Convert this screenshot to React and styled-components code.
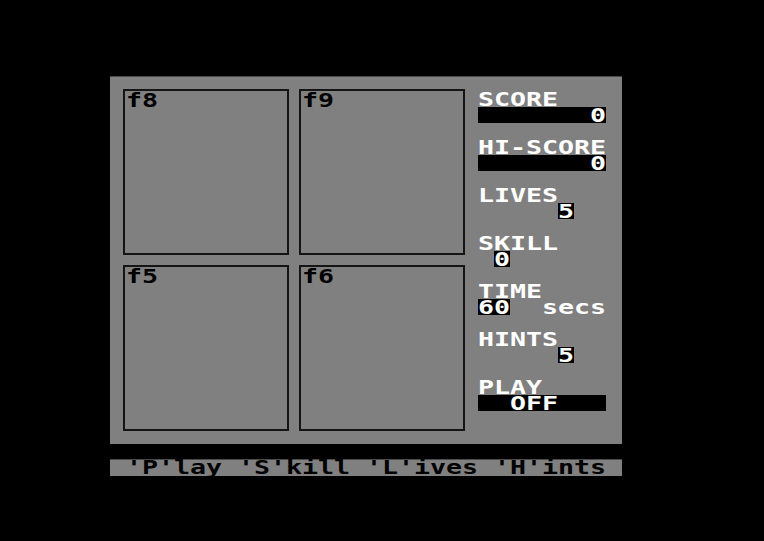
import React from 'react'
import styled, { createGlobalStyle } from 'styled-components'

const GlobalStyle = createGlobalStyle`
  html, body {
    margin: 0;
    padding: 0;
    background: #000;
  }
  body {
    width: 764px;
    height: 541px;
    overflow: hidden;
  }
`

const Screen = styled.div`
  width: 764px;
  height: 541px;
  padding: 76px 0 0 110px;
  box-sizing: border-box;
  background: #000;
`

const Panel = styled.div`
  width: 512px;
  height: 368px;
  box-sizing: border-box;
  background: #808080;
  border-top: 1px solid #4a4a4a;
  padding: 12px 0 0 13px;
  display: flex;
  align-items: flex-start;
`

const Board = styled.div`
  display: grid;
  grid-template-columns: 166px 166px;
  grid-template-rows: 166px 166px;
  gap: 10px;
`

const Box = styled.div`
  box-sizing: border-box;
  border: 2px solid #141414;
  padding: 1px 0 0 1px;
`

const Side = styled.div`
  margin: 2px 0 0 13px;
  width: 128px;
  display: flex;
  flex-direction: column;
`

const Field = styled.div`
  display: flex;
  flex-direction: column;
  margin-bottom: 16px;
`

const Line = styled.div`
  display: flex;
  height: 16px;
  padding-left: ${(p) => (p.col || 0) * 16}px;
  justify-content: ${(p) => (p.right ? 'flex-end' : 'flex-start')};
`

const Bar = styled(Line)`
  background: #000;
  width: 128px;
  box-sizing: border-box;
`

const Tile = styled.span`
  display: inline-flex;
  background: ${(p) => (p.clear ? 'transparent' : '#000')};
  height: 16px;
  margin-left: ${(p) => (p.skip || 0) * 16}px;
`

const Cell = styled.span`
  display: inline-block;
  width: 16px;
  height: 16px;
  line-height: 16px;
  text-align: center;
  font-family: "DejaVu Sans Mono", "Liberation Mono", monospace;
  font-weight: bold;
  font-size: 19px;
  color: ${(p) => p.color || '#fff'};
  transform: scaleX(1.4);
  white-space: pre;
`

const Status = styled.div`
  margin-top: 15px;
  width: 512px;
  height: 17px;
  box-sizing: border-box;
  background: #808080;
  border-top: 1px solid #4a4a4a;
  padding-left: 16px;
  display: flex;
  > span {
    margin-top: -1px;
  }
`

const Chars = ({ text, color }) =>
  text.split('').map((ch, i) => (
    <Cell key={i} color={color}>
      {ch}
    </Cell>
  ))

const boxes = ['f8', 'f9', 'f5', 'f6']

export default function App() {
  return (
    <>
      <GlobalStyle />
      <Screen>
        <Panel>
          <Board>
            {boxes.map((b) => (
              <Box key={b}>
                <Line>
                  <Chars text={b} color="#000" />
                </Line>
              </Box>
            ))}
          </Board>
          <Side>
            <Field>
              <Line><Chars text="SCORE" /></Line>
              <Bar right><Chars text="0" /></Bar>
            </Field>
            <Field>
              <Line><Chars text="HI-SCORE" /></Line>
              <Bar right><Chars text="0" /></Bar>
            </Field>
            <Field>
              <Line><Chars text="LIVES" /></Line>
              <Line><Tile skip={5}><Chars text="5" /></Tile></Line>
            </Field>
            <Field>
              <Line><Chars text="SKILL" /></Line>
              <Line><Tile skip={1}><Chars text="0" /></Tile></Line>
            </Field>
            <Field>
              <Line><Chars text="TIME" /></Line>
              <Line>
                <Tile><Chars text="60" /></Tile>
                <Tile skip={2} clear>
                  <Chars text="secs" />
                </Tile>
              </Line>
            </Field>
            <Field>
              <Line><Chars text="HINTS" /></Line>
              <Line><Tile skip={5}><Chars text="5" /></Tile></Line>
            </Field>
            <Field>
              <Line><Chars text="PLAY" /></Line>
              <Bar col={2}><Chars text="OFF" /></Bar>
            </Field>
          </Side>
        </Panel>
        <Status>
          <Chars text="'P'lay 'S'kill 'L'ives 'H'ints" color="#000" />
        </Status>
      </Screen>
    </>
  )
}
